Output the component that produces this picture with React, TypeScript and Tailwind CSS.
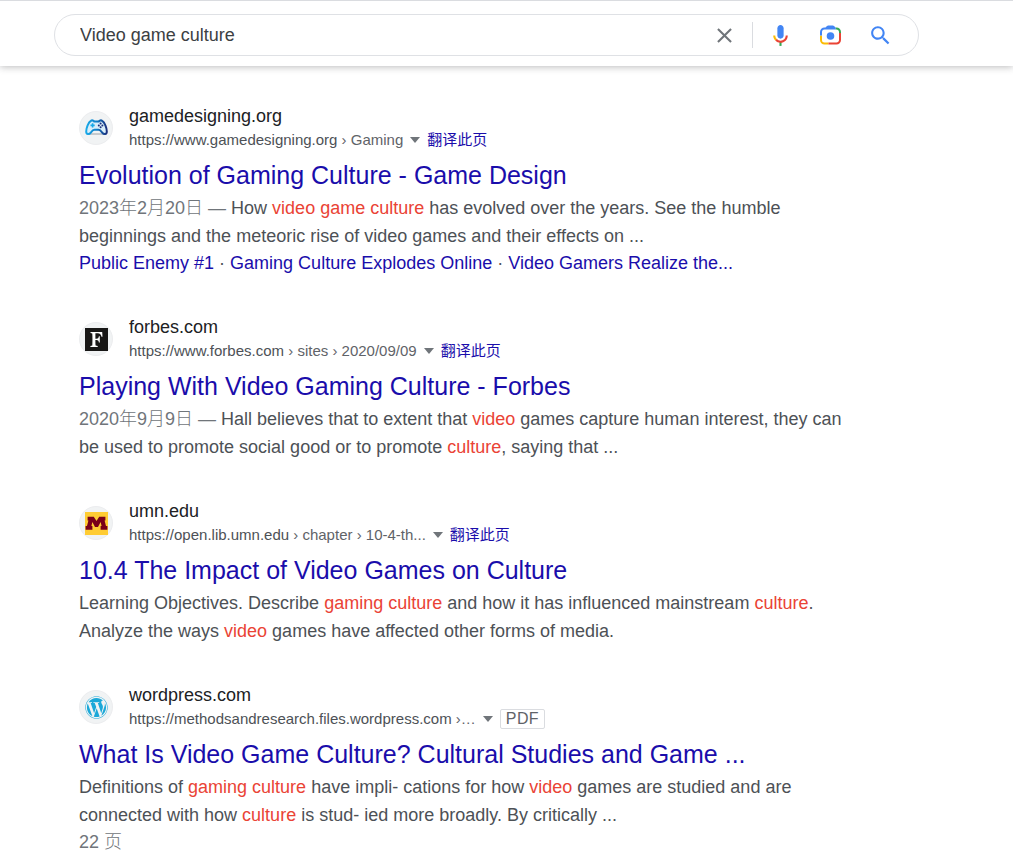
import type { ReactNode } from 'react';
import { FaWordpress } from 'react-icons/fa';

function CloseIcon() {
  return (
    <svg viewBox="0 0 24 24" className="size-[25px]" fill="#70757a" aria-hidden="true">
      <path d="M19 6.41L17.59 5 12 10.59 6.41 5 5 6.41 10.59 12 5 17.59 6.41 19 12 13.41 17.59 19 19 17.59 13.41 12z" />
    </svg>
  );
}

function MicIcon() {
  return (
    <svg viewBox="0 0 24 24" className="size-[25px]" aria-hidden="true">
      <path fill="#4285f4" d="m12 15c1.66 0 3-1.31 3-2.97v-7.02c0-1.66-1.34-3.01-3-3.01s-3 1.34-3 3.01v7.02c0 1.66 1.34 2.97 3 2.97z" />
      <path fill="#34a853" d="m11 18.08h2v3.92h-2z" />
      <path fill="#fbbc05" d="m7.05 16.87c-1.27-1.33-2.05-2.83-2.05-4.87h2c0 1.45 0.56 2.42 1.47 3.38v0.32l-1.15 1.18z" />
      <path fill="#ea4335" d="m12 16.93a4.97 5.25 0 0 1 -3.54 -1.55l-1.41 1.49c1.26 1.34 3.02 2.13 4.95 2.13 3.87 0 6.99-2.92 6.99-7h-1.99c0 2.92-2.24 4.93-5 4.93z" />
    </svg>
  );
}

function LensIcon() {
  return (
    <svg viewBox="0 0 25 25" className="size-[25px]" fill="none" strokeWidth="2" aria-hidden="true">
      <path stroke="#fbbc04" d="M3 12.5V17A3.5 3.5 0 0 0 6.5 20.5H10.5" />
      <path stroke="#ea4335" d="M10.5 20.5H18.5A3.5 3.5 0 0 0 22 17V10" />
      <path stroke="#34a853" d="M17.5 5.5H18.5A3.5 3.5 0 0 1 22 9V10" />
      <path stroke="#4285f4" d="M3 12.5V9A3.5 3.5 0 0 1 6.5 5.5H17.5" />
      <path fill="#4285f4" d="M7 5.5L8.8 3.2Q9.4 2.5 10.2 2.5H14.8Q15.6 2.5 16.2 3.2L18 5.5z" />
      <circle cx="12.5" cy="13" r="3.8" fill="#4285f4" />
    </svg>
  );
}

function SearchIcon() {
  return (
    <svg viewBox="0 0 24 24" className="size-[25px]" fill="#4285f4" aria-hidden="true">
      <path d="M15.5 14h-.79l-.28-.27C15.41 12.59 16 11.11 16 9.5 16 5.91 13.09 3 9.5 3S3 5.91 3 9.5 5.91 16 9.5 16c1.61 0 3.09-.59 4.23-1.57l.27.28v.79l5 4.99L20.49 19l-4.99-5zm-6 0C7.01 14 5 11.99 5 9.5S7.01 5 9.5 5 14 7.01 14 9.5 11.99 14 9.5 14z" />
    </svg>
  );
}

function GamepadLogo() {
  return (
    <svg viewBox="0 0 23 23" className="size-[23px]" fill="none" aria-hidden="true">
      <defs>
        <linearGradient id="pad" x1="0" y1="0" x2="1" y2="0">
          <stop offset="0" stopColor="#19a9e8" />
          <stop offset="0.5" stopColor="#0f7fc8" />
          <stop offset="1" stopColor="#1b2f7c" />
        </linearGradient>
      </defs>
      <path d="M4 17H19" stroke="#9aa0a6" strokeWidth="1" />
      <path
        d="M5.8 3.8C7 3 8.6 3.4 9.2 4.5H13.8C14.4 3.4 16 3 17.2 3.8C19.6 5.2 21.8 11 21.8 14.4C21.8 17.8 18.8 17.7 17.2 15.6C15.8 13.7 15 12.8 13.6 12.8H9.4C8 12.8 7.2 13.7 5.8 15.6C4.2 17.7 1.2 17.8 1.2 14.4C1.2 11 3.4 5.2 5.8 3.8Z"
        fill="#d9eefa"
        stroke="url(#pad)"
        strokeWidth="2"
      />
      <path d="M7.6 6.3V10.5M5.5 8.4H9.7" stroke="#19a9e8" strokeWidth="1.6" />
      <g fill="#1b2f7c">
        <circle cx="15.6" cy="6.6" r="1" />
        <circle cx="15.6" cy="10.2" r="1" />
        <circle cx="13.8" cy="8.4" r="1" />
        <circle cx="17.4" cy="8.4" r="1" />
      </g>
    </svg>
  );
}

function ForbesLogo() {
  return (
    <svg viewBox="0 0 23 23" className="size-[23px]" aria-hidden="true">
      <rect width="23" height="23" fill="#181716" />
      <path
        fill="#fff"
        d="M5.5 4H17.2L17.5 8.8H16.5C16 6.5 15 5.2 12.8 5.2H10.4V10.8H11.4C13 10.8 13.6 10 13.9 8.3H14.8V14.4H13.9C13.6 12.7 13 12 11.4 12H10.4C10.4 14.3 10.4 16 10.6 17.5L12.7 18V18.9H5.4V18L7.3 17.5C7.5 14 7.5 9 7.3 5.4L5.5 4.9Z"
      />
    </svg>
  );
}

function MinnesotaLogo() {
  return (
    <svg viewBox="0 0 23 23" className="size-[23px]" aria-hidden="true">
      <rect width="23" height="23" fill="#ffcc33" />
      <path
        fill="#7a0019"
        d="M2.6 4.8H8.8L11.5 9L14.2 4.8H20.4V8.6H19.6L21 14H22.4V17.8H15.6V14H16.6L15.6 10L13 15H10L7.4 10L6.4 14H7.4V17.8H0.6V14H2L3.4 8.6H2.6Z"
      />
    </svg>
  );
}

function Hit({ children }: { children: ReactNode }) {
  return <em className="text-[#ea4335] not-italic">{children}</em>;
}

function DateText({ children }: { children: ReactNode }) {
  return <span className="font-light text-[#70757a]">{children} — </span>;
}

type ResultProps = {
  icon: ReactNode;
  site: string;
  url: string;
  path: string;
  title: string;
  pdf?: boolean;
  children: ReactNode;
};

function Result({ icon, site, url, path, title, pdf, children }: ResultProps) {
  return (
    <article>
      <div className="flex items-center gap-4">
        <span className="flex size-[34px] shrink-0 items-center justify-center rounded-full border border-[#ecedef] bg-[#f1f3f4]">
          {icon}
        </span>
        <div>
          <div className="text-lg leading-6 text-[#202124]">{site}</div>
          <div className="flex h-6 items-center text-[15px] leading-6">
            <cite className="text-[#4d5156] not-italic">
              {url}
              <span className="text-[#5f6368]">{path}</span>
            </cite>
            <button type="button" aria-label="More about this result" className="px-[7px]">
              <svg viewBox="0 0 10 6" className="h-1.5 w-2.5" fill="#70757a" aria-hidden="true">
                <path d="M0 0H10L5 6z" />
              </svg>
            </button>
            {pdf ? (
              <span className="rounded-xs border border-[#dadce0] px-[5px] text-base leading-[18px] tracking-wide text-[#5f6368]">PDF</span>
            ) : (
              <a href="#translate" className="text-[#1a0dab]">翻译此页</a>
            )}
          </div>
        </div>
      </div>
      <h3 className="pt-1.5 pb-0.5 text-[25px] leading-[34px] text-[#1a0dab]">
        <a href="#result">{title}</a>
      </h3>
      <div className="text-lg leading-7 text-[#4d5156]">{children}</div>
    </article>
  );
}

export default function App() {
  return (
    <div className="min-h-screen bg-white font-['Liberation_Sans','Noto_Sans_CJK_SC',sans-serif]">
      <header className="border-t border-[#dadce0] pt-[13px] pr-6 pb-2.5 pl-[54px] shadow-[0_1px_7px_rgba(32,33,36,0.3)]">
        <form role="search" className="flex h-[42px] max-w-[865px] items-center rounded-full border border-[#dfe1e5] pr-[13px] pl-[25px]">
          <input
            type="text"
            aria-label="Search"
            defaultValue="Video game culture"
            className="min-w-0 flex-1 bg-transparent text-lg text-[#3c4043] outline-none"
          />
          <button type="button" aria-label="Clear" className="mr-[15px]">
            <CloseIcon />
          </button>
          <span className="mr-0.5 h-[26px] border-l border-[#dadce0]" />
          <button type="button" aria-label="Search by voice" className="flex w-[50px] justify-center">
            <MicIcon />
          </button>
          <button type="button" aria-label="Search by image" className="flex w-[50px] justify-center">
            <LensIcon />
          </button>
          <button type="submit" aria-label="Search" className="flex w-[50px] justify-center">
            <SearchIcon />
          </button>
        </form>
      </header>

      <main className="flex max-w-[855px] flex-col gap-[38px] pt-[38px] pl-[79px]">
        <Result
          icon={<GamepadLogo />}
          site="gamedesigning.org"
          url="https://www.gamedesigning.org"
          path=" › Gaming"
          title="Evolution of Gaming Culture - Game Design"
        >
          <p>
            <DateText>2023年2月20日</DateText>How <Hit>video game culture</Hit> has evolved over the years. See the humble
            beginnings and the meteoric rise of video games and their effects on ...
          </p>
          <p className="leading-[27px]">
            <a href="#enemy" className="text-[#1a0dab]">Public Enemy #1</a> ·{' '}
            <a href="#explodes" className="text-[#1a0dab]">Gaming Culture Explodes Online</a> ·{' '}
            <a href="#gamers" className="text-[#1a0dab]">Video Gamers Realize the...</a>
          </p>
        </Result>

        <Result
          icon={<ForbesLogo />}
          site="forbes.com"
          url="https://www.forbes.com"
          path=" › sites › 2020/09/09"
          title="Playing With Video Gaming Culture - Forbes"
        >
          <p>
            <DateText>2020年9月9日</DateText>Hall believes that to extent that <Hit>video</Hit> games capture human interest,
            they can be used to promote social good or to promote <Hit>culture</Hit>, saying that ...
          </p>
        </Result>

        <Result
          icon={<MinnesotaLogo />}
          site="umn.edu"
          url="https://open.lib.umn.edu"
          path=" › chapter › 10-4-th..."
          title="10.4 The Impact of Video Games on Culture"
        >
          <p>
            Learning Objectives. Describe <Hit>gaming culture</Hit> and how it has influenced mainstream <Hit>culture</Hit>.
            Analyze the ways <Hit>video</Hit> games have affected other forms of media.
          </p>
        </Result>

        <Result
          icon={<FaWordpress className="size-[23px] text-[#1ba8d8]" aria-hidden="true" />}
          site="wordpress.com"
          url="https://methodsandresearch.files.wordpress.com"
          path=" ›…"
          title="What Is Video Game Culture? Cultural Studies and Game ..."
          pdf
        >
          <p>
            Definitions of <Hit>gaming culture</Hit> have impli- cations for how <Hit>video</Hit> games are studied and are
            connected with how <Hit>culture</Hit> is stud- ied more broadly. By critically ...
          </p>
          <p className="leading-[27px] font-light text-[#70757a]">22 页</p>
        </Result>
      </main>
    </div>
  );
}
